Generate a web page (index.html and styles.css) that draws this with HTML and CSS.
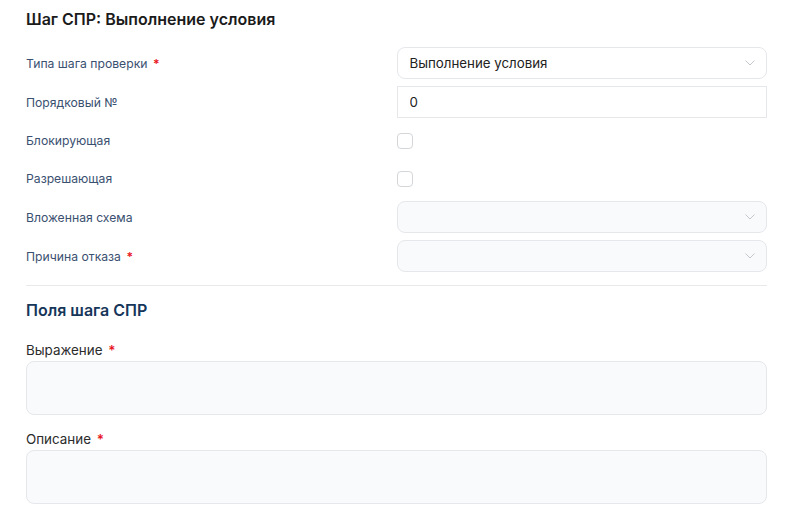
FILE: index.html
```html
<!DOCTYPE html>
<html>
<head>
    <title>Шаг СПР</title>
    <link rel="stylesheet" href="styles.css">
</head>
<body>
    <div class="page">
        <h1 class="title">Шаг СПР: Выполнение условия</h1>

        <div class="form-grid">
            <div class="row">
                <label class="row-label">Типа шага проверки <span class="req">*</span></label>
                <div class="select">
                    <span class="select-value">Выполнение условия</span>
                    <svg class="chevron" width="10" height="6" viewBox="0 0 10 6"><path d="M0.5 0.5 L5 5 L9.5 0.5" fill="none" stroke="#c4c7cc" stroke-width="1"/></svg>
                </div>
            </div>
            <div class="row">
                <label class="row-label">Порядковый №</label>
                <input class="text-input" type="text" value="0">
            </div>
            <div class="row short">
                <label class="row-label">Блокирующая</label>
                <span class="checkbox"></span>
            </div>
            <div class="row short">
                <label class="row-label">Разрешающая</label>
                <span class="checkbox"></span>
            </div>
            <div class="row">
                <label class="row-label">Вложенная схема</label>
                <div class="select empty">
                    <span class="select-value"></span>
                    <svg class="chevron" width="10" height="6" viewBox="0 0 10 6"><path d="M0.5 0.5 L5 5 L9.5 0.5" fill="none" stroke="#c4c7cc" stroke-width="1"/></svg>
                </div>
            </div>
            <div class="row">
                <label class="row-label">Причина отказа <span class="req">*</span></label>
                <div class="select empty">
                    <span class="select-value"></span>
                    <svg class="chevron" width="10" height="6" viewBox="0 0 10 6"><path d="M0.5 0.5 L5 5 L9.5 0.5" fill="none" stroke="#c4c7cc" stroke-width="1"/></svg>
                </div>
            </div>
        </div>

        <hr class="divider">

        <h2 class="section-title">Поля шага СПР</h2>

        <div class="field">
            <label class="field-label">Выражение <span class="req">*</span></label>
            <div class="textarea"></div>
        </div>
        <div class="field">
            <label class="field-label">Описание <span class="req">*</span></label>
            <div class="textarea"></div>
        </div>
    </div>
</body>
</html>
```

FILE: styles.css
```css
body {
    margin: 0;
    padding: 0;
    background-color: #fff;
    font-family: Inter, "Noto Sans", sans-serif;
}

.page {
    padding: 8px 37px 0 26px;
}

.title {
    font-size: 16px;
    font-weight: 600;
    color: #1b1b1b;
    margin: 0;
    line-height: 22px;
}

.form-grid {
    margin-top: 17px;
    display: flex;
    flex-direction: column;
    gap: 7px;
}

.row {
    display: grid;
    grid-template-columns: 1fr 1fr;
    align-items: center;
    height: 32px;
}

.row.short {
    height: 31px;
}

.row-label {
    font-size: 12.2px;
    color: #3a5070;
}

.req {
    color: #e8121b;
    font-weight: 600;
    margin-left: 2px;
}

.select {
    height: 32px;
    box-sizing: border-box;
    border: 1px solid #e5e7eb;
    border-radius: 8px;
    background-color: #fff;
    display: flex;
    align-items: center;
    justify-content: space-between;
    padding: 0 11px 0 12px;
}

.select.empty {
    background-color: #f9fafb;
}

.select-value {
    font-size: 13.3px;
    color: #222;
}

.chevron {
    display: block;
}

.text-input {
    height: 32px;
    box-sizing: border-box;
    border: 1px solid #e5e7eb;
    border-radius: 0;
    padding: 0 12px;
    font-family: inherit;
    font-size: 13.3px;
    color: #222;
    outline: none;
}

.checkbox {
    width: 16px;
    height: 16px;
    box-sizing: border-box;
    border: 1px solid #d4d6da;
    border-radius: 4px;
    background-color: #fff;
}

.divider {
    border: none;
    border-top: 1px solid #e8e9ec;
    margin: 13px 0 0 0;
}

.section-title {
    font-size: 16px;
    font-weight: 600;
    color: #16365a;
    margin: 14px 0 0 0;
    line-height: 20px;
}

.field {
    margin-top: 21px;
}

.field + .field {
    margin-top: 15px;
}

.field-label {
    display: block;
    font-size: 13.4px;
    color: #2b2b2b;
    line-height: 18px;
    margin-bottom: 2px;
}

.textarea {
    height: 54px;
    box-sizing: border-box;
    border: 1px solid #e5e7eb;
    border-radius: 8px;
    background-color: #f9fafb;
}
```
